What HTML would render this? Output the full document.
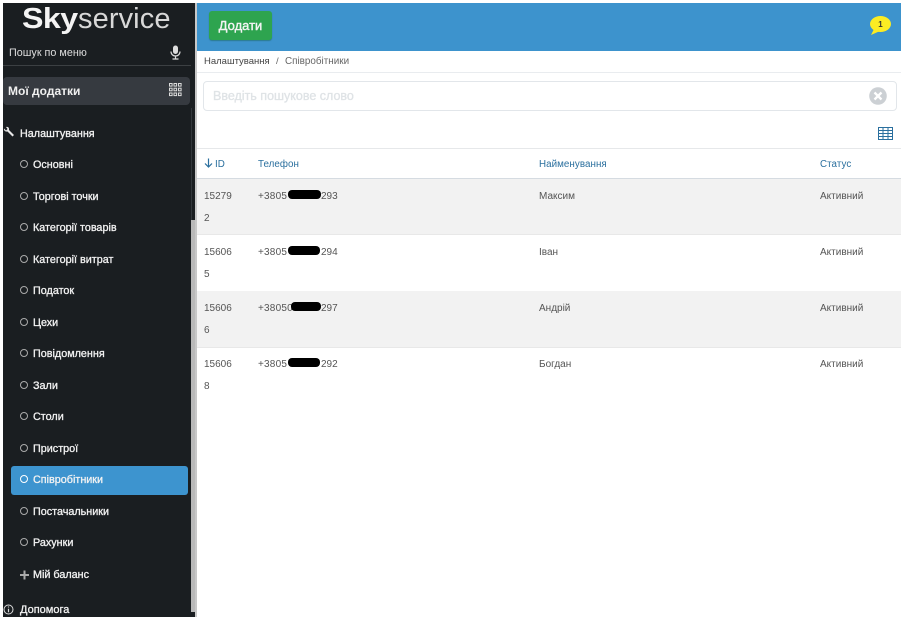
<!DOCTYPE html>
<html><head><meta charset="utf-8"><style>
html,body{margin:0;padding:0;width:901px;height:617px;overflow:hidden;background:#fff;font-family:"Liberation Sans",sans-serif}
#w{position:absolute;left:0;top:0;width:901px;height:617px;overflow:hidden;filter:blur(.35px)}
.a{position:absolute;white-space:nowrap}
#side{position:absolute;left:3px;top:3px;width:193px;height:614px;background:#1a1e21}
.m{position:absolute;left:33px;margin-top:1px;color:#f2f2f2;font-size:10.8px;-webkit-text-stroke:.3px #f2f2f2;line-height:14px;white-space:nowrap}
.c{position:absolute;left:20px;width:6px;height:6px;border:1.3px solid #aaa;border-radius:50%}
.t{position:absolute;margin-top:1.5px;font-size:10px;color:#555;line-height:14px;white-space:nowrap}
.h{position:absolute;margin-top:1.5px;font-size:9.8px;color:#2a6f9e;line-height:14px;white-space:nowrap;letter-spacing:.05px}
.r{position:absolute;left:196px;width:705px;height:56px}
.b{position:absolute;height:8.5px;background:#000;border-radius:4px}
</style></head><body><div id="w">
<div id="side"></div>
<div class="a" style="left:22px;top:1px;color:#f4f4f4;font-size:29px;line-height:36px"><b style="display:inline-block;width:56px;transform:scaleX(1.11);transform-origin:left;letter-spacing:-.5px">Sky</b><span style="font-weight:normal;color:#d8d8d8;letter-spacing:.1px">service</span></div>
<div class="a" style="left:9px;top:46px;font-size:10.8px;color:#ddd;line-height:14px">Пошук по меню</div>
<svg class="a" style="left:169px;top:45px" width="13" height="15" viewBox="0 0 13 15"><rect x="4" y="0.5" width="5" height="8.5" rx="2.5" fill="#ddd"/><path d="M2 6.5c0 6 9 6 9 0M6.5 11v2.5M3.5 14h6" fill="none" stroke="#ddd" stroke-width="1.2"/></svg>
<div class="a" style="left:3px;top:65px;width:188px;height:1px;background:#3c4043"></div>
<div class="a" style="left:3px;top:77px;width:187px;height:28px;background:#363a40;border-radius:4px"></div>
<div class="a" style="left:8px;top:83px;font-size:12px;font-weight:bold;color:#f0f0f0;line-height:16px">Мої додатки</div>
<svg class="a" style="left:169px;top:83px" width="13" height="14" viewBox="0 0 13 14" fill="none" stroke="#ddd" stroke-width="1"><rect x=".5" y=".5" width="2.6" height="2.6"/><rect x="5" y=".5" width="2.6" height="2.6"/><rect x="9.5" y=".5" width="2.6" height="2.6"/><rect x=".5" y="5.2" width="2.6" height="2.6"/><rect x="5" y="5.2" width="2.6" height="2.6"/><rect x="9.5" y="5.2" width="2.6" height="2.6"/><rect x=".5" y="10" width="2.6" height="2.6"/><rect x="5" y="10" width="2.6" height="2.6"/><rect x="9.5" y="10" width="2.6" height="2.6"/></svg>
<svg class="a" style="left:3px;top:126px" width="12" height="12" viewBox="0 0 12 12"><path d="M1 2.5 3 4.5 4.5 3 3 1C5 .3 6.5 1.8 6 4L11 9 9.5 10.5 4.5 5.5C2.5 6 .5 4.5 1 2.5Z" fill="#e8e8e8"/></svg>
<div class="m" style="left:20px;top:126px">Налаштування</div>
<div class="a" style="left:11px;top:466px;width:177px;height:29px;background:#3d94cf;border-radius:3px"></div>
<i class="c" style="top:160px"></i><div class="m" style="top:157px">Основні</div>
<i class="c" style="top:192px"></i><div class="m" style="top:189px">Торгові точки</div>
<i class="c" style="top:223px"></i><div class="m" style="top:220px">Категорії товарів</div>
<i class="c" style="top:255px"></i><div class="m" style="top:252px">Категорії витрат</div>
<i class="c" style="top:286px"></i><div class="m" style="top:283px">Податок</div>
<i class="c" style="top:318px"></i><div class="m" style="top:315px">Цехи</div>
<i class="c" style="top:349px"></i><div class="m" style="top:346px">Повідомлення</div>
<i class="c" style="top:381px"></i><div class="m" style="top:378px">Зали</div>
<i class="c" style="top:412px"></i><div class="m" style="top:409px">Столи</div>
<i class="c" style="top:444px"></i><div class="m" style="top:441px">Пристрої</div>
<i class="c" style="top:475px;border-color:#fff"></i><div class="m" style="top:472px">Співробітники</div>
<i class="c" style="top:507px"></i><div class="m" style="top:504px">Постачальники</div>
<i class="c" style="top:538px"></i><div class="m" style="top:535px">Рахунки</div>
<svg class="a" style="left:20px;top:570px" width="10" height="10"><path d="M0 5h9M4.5 .5v9" stroke="#aaa" stroke-width="2"/></svg>
<div class="m" style="top:567px">Мій баланс</div>
<svg class="a" style="left:3px;top:604px" width="11" height="11" viewBox="0 0 11 11"><circle cx="5.5" cy="5.5" r="4.5" fill="none" stroke="#ddd" stroke-width="1"/><path d="M5.5 2.5v1M5.5 4.7v3.5" stroke="#ddd" stroke-width="1.2"/></svg>
<div class="m" style="left:20px;top:602px;font-size:11px">Допомога</div>
<div class="a" style="left:191px;top:108px;width:1px;height:112px;background:#33383c"></div>
<div class="a" style="left:191px;top:220px;width:4px;height:392px;background:#b9b9b9"></div>

<div class="a" style="left:196px;top:3px;width:705px;height:48px;background:#3d93cd"></div>
<div class="a" style="left:209px;top:11px;width:63px;height:29px;background:#2ea44f;border-radius:3px;box-shadow:0 1px 1px #2b7a8f;color:#f4f4f4;font-size:13px;-webkit-text-stroke:.4px #f4f4f4;line-height:29px;text-align:center">Додати</div>
<svg class="a" style="left:869px;top:14px" width="23" height="22" viewBox="0 0 23 22"><ellipse cx="11.5" cy="10" rx="10.5" ry="8" fill="#fcec23"/><path d="M5 15 2 21 11 17Z" fill="#fcec23"/><text x="11.5" y="13" font-size="8" font-weight="bold" text-anchor="middle" font-family="Liberation Sans" fill="#333">1</text></svg>
<div class="a" style="left:204px;top:55px;font-size:9.5px;color:#444;line-height:14px">Налаштування</div>
<div class="a" style="left:276px;top:55px;font-size:9.5px;color:#666;line-height:14px">/</div>
<div class="a" style="left:285px;top:55px;font-size:9.9px;color:#666;line-height:14px">Співробітники</div>
<div class="a" style="left:196px;top:72px;width:705px;height:1px;background:#e9ecef"></div>
<div class="a" style="left:203px;top:81px;width:692px;height:28px;border:1px solid #e2e6ea;border-radius:4px"></div>
<div class="a" style="left:213px;top:88px;font-size:12.5px;-webkit-text-stroke:.3px #dfe3e6;color:#dfe3e6;line-height:16px">Введіть пошукове слово</div>
<svg class="a" style="left:869px;top:87px" width="18" height="18" viewBox="0 0 18 18"><circle cx="9" cy="9" r="8.8" fill="#ccd0d4"/><path d="M5.5 5.5 12.5 12.5M12.5 5.5 5.5 12.5" stroke="#fff" stroke-width="2.3"/></svg>
<svg class="a" style="left:878px;top:127px" width="15" height="13" viewBox="0 0 15 13" fill="none" stroke="#2a6f9e" stroke-width="1"><rect x=".5" y=".5" width="14" height="12"/><path d="M.5 3.5h14M.5 6.5h14M.5 9.5h14M5 .5v12M10 .5v12"/></svg>
<div class="a" style="left:196px;top:148px;width:705px;height:1px;background:#e6e8ea"></div>
<svg class="a" style="left:204px;top:158px" width="9" height="10" viewBox="0 0 9 10"><path d="M4.5 .5v8M1 5.5 4.5 9 8 5.5" fill="none" stroke="#2a6f9e" stroke-width="1.2"/></svg>
<div class="h" style="left:215px;top:156px">ID</div>
<div class="h" style="left:258px;top:156px">Телефон</div>
<div class="h" style="left:539px;top:156px">Найменування</div>
<div class="h" style="left:820px;top:156px">Статус</div>
<div class="a" style="left:196px;top:178px;width:705px;height:1px;background:#d5dbe1"></div>
<div class="r" style="top:179px;background:#f2f2f2"></div>
<div class="a" style="left:196px;top:234px;width:705px;height:1px;background:#e8e8e8"></div>
<div class="r" style="top:291px;background:#f2f2f2"></div>
<div class="a" style="left:196px;top:347px;width:705px;height:1px;background:#e8e8e8"></div>
<div class="a" style="left:195px;top:3px;width:2px;height:614px;background:#c8c8c8"></div>

<div class="t" style="left:204px;top:188px">15279</div><div class="t" style="left:204px;top:210px">2</div>
<div class="t" style="left:258px;top:188px;letter-spacing:.2px">+3805</div><div class="b" style="left:288px;top:190px;width:33px"></div><div class="t" style="left:321px;top:188px">293</div>
<div class="t" style="left:539px;top:188px">Максим</div><div class="t" style="left:820px;top:188px">Активний</div>

<div class="t" style="left:204px;top:244px">15606</div><div class="t" style="left:204px;top:266px">5</div>
<div class="t" style="left:258px;top:244px;letter-spacing:.2px">+3805</div><div class="b" style="left:288px;top:246px;width:32px"></div><div class="t" style="left:321px;top:244px">294</div>
<div class="t" style="left:539px;top:244px">Іван</div><div class="t" style="left:820px;top:244px">Активний</div>

<div class="t" style="left:204px;top:300px">15606</div><div class="t" style="left:204px;top:322px">6</div>
<div class="t" style="left:258px;top:300px;letter-spacing:.2px">+38050</div><div class="b" style="left:291px;top:302px;width:30px"></div><div class="t" style="left:321px;top:300px">297</div>
<div class="t" style="left:539px;top:300px">Андрій</div><div class="t" style="left:820px;top:300px">Активний</div>

<div class="t" style="left:204px;top:356px">15606</div><div class="t" style="left:204px;top:378px">8</div>
<div class="t" style="left:258px;top:356px;letter-spacing:.2px">+3805</div><div class="b" style="left:288px;top:358px;width:32px"></div><div class="t" style="left:321px;top:356px">292</div>
<div class="t" style="left:539px;top:356px">Богдан</div><div class="t" style="left:820px;top:356px">Активний</div>
</div></body></html>
